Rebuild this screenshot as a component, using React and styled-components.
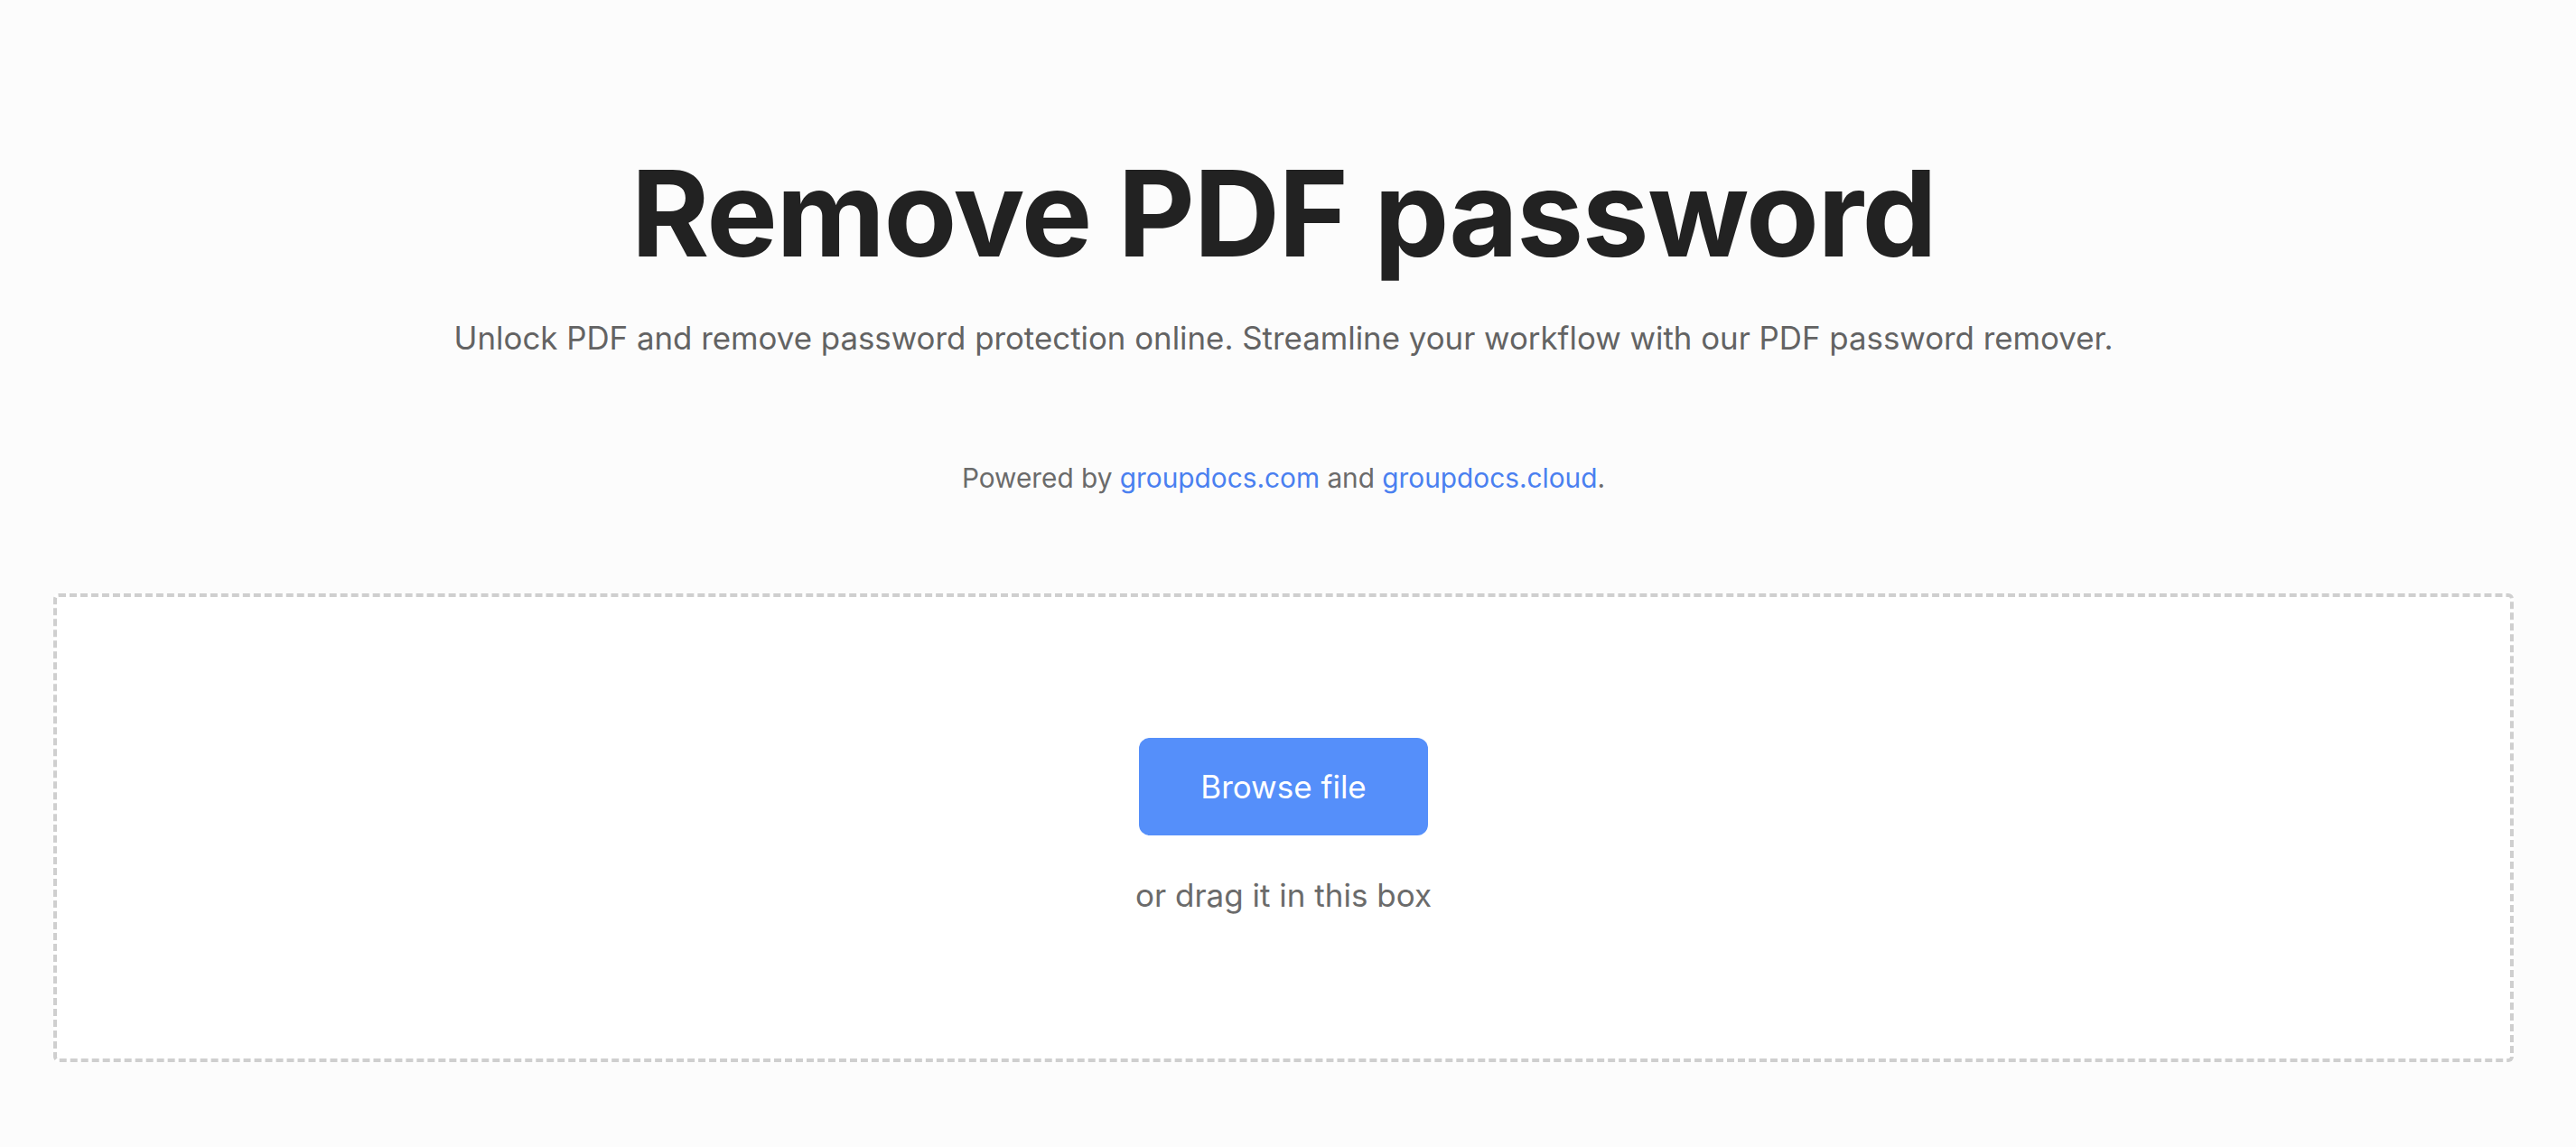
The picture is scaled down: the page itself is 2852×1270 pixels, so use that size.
import React from 'react'
import styled, { createGlobalStyle } from 'styled-components'

const GlobalStyle = createGlobalStyle`
  html, body {
    margin: 0;
    padding: 0;
    background: #fcfcfc;
    font-family: Inter, "Noto Sans", sans-serif;
  }
`;

const Page = styled.div`
  margin-right: 10px;
  padding: 157px 59px 94px;
  display: flex;
  flex-direction: column;
  align-items: center;
`;

const Title = styled.h1`
  margin: 0;
  font-size: 132px;
  line-height: 158px;
  font-weight: 700;
  letter-spacing: -1.5px;
  color: #222222;
  text-align: center;
`;

const Subtitle = styled.p`
  margin: 35px 0 0;
  font-size: 34.85px;
  line-height: 49.5px;
  color: #636363;
  text-align: center;
`;

const Powered = styled.p`
  margin: 107px 0 0;
  font-size: 29.8px;
  line-height: 44px;
  color: #6b6b6b;
  text-align: center;
`;

const Link = styled.a`
  color: #4a80f0;
  text-decoration: none;
`;

const DropBox = styled.div`
  margin-top: 106px;
  box-sizing: border-box;
  width: 100%;
  height: 519px;
  border: 4px dashed #cfcfcf;
  border-radius: 6px;
  background: #ffffff;
  display: flex;
  flex-direction: column;
  align-items: center;
  padding-top: 156px;
`;

const BrowseButton = styled.button`
  width: 320px;
  height: 108px;
  border: none;
  border-radius: 12px;
  background: #558ffa;
  color: #ffffff;
  font-family: Inter, "Noto Sans", sans-serif;
  font-size: 35px;
  font-weight: 400;
  cursor: pointer;
`;

const DragHint = styled.div`
  margin-top: 42px;
  font-size: 35px;
  line-height: 48px;
  color: #6b6b6b;
`;

const App = () => {
  return (
    <>
      <GlobalStyle />
      <Page>
        <Title>Remove PDF password</Title>
        <Subtitle>
          Unlock PDF and remove password protection online. Streamline your workflow with our PDF password remover.
        </Subtitle>
        <Powered>
          Powered by <Link href="#">groupdocs.com</Link> and <Link href="#">groupdocs.cloud</Link>.
        </Powered>
        <DropBox>
          <BrowseButton>Browse file</BrowseButton>
          <DragHint>or drag it in this box</DragHint>
        </DropBox>
      </Page>
    </>
  )
}

export default App
